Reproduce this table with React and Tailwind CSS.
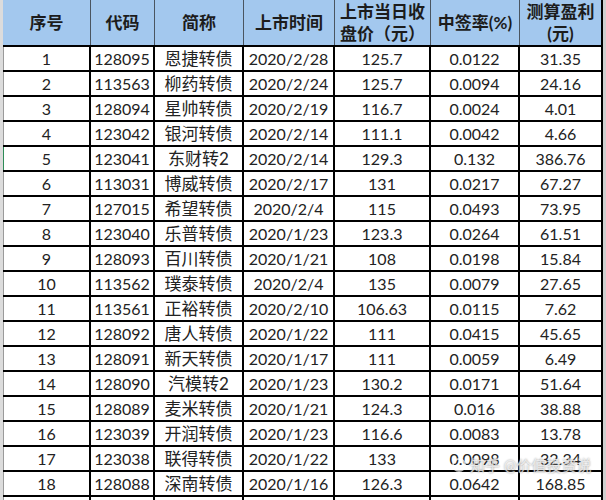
import React from 'react';

const rows = [
  ['1', '128095', '恩捷转债', '2020/2/28', '125.7', '0.0122', '31.35'],
  ['2', '113563', '柳药转债', '2020/2/24', '125.7', '0.0094', '24.16'],
  ['3', '128094', '星帅转债', '2020/2/19', '116.7', '0.0024', '4.01'],
  ['4', '123042', '银河转债', '2020/2/14', '111.1', '0.0042', '4.66'],
  ['5', '123041', '东财转2', '2020/2/14', '129.3', '0.132', '386.76'],
  ['6', '113031', '博威转债', '2020/2/17', '131', '0.0217', '67.27'],
  ['7', '127015', '希望转债', '2020/2/4', '115', '0.0493', '73.95'],
  ['8', '123040', '乐普转债', '2020/1/23', '123.3', '0.0264', '61.51'],
  ['9', '128093', '百川转债', '2020/1/21', '108', '0.0198', '15.84'],
  ['10', '113562', '璞泰转债', '2020/2/4', '135', '0.0079', '27.65'],
  ['11', '113561', '正裕转债', '2020/2/10', '106.63', '0.0115', '7.62'],
  ['12', '128092', '唐人转债', '2020/1/22', '111', '0.0415', '45.65'],
  ['13', '128091', '新天转债', '2020/1/17', '111', '0.0059', '6.49'],
  ['14', '128090', '汽模转2', '2020/1/23', '130.2', '0.0171', '51.64'],
  ['15', '128089', '麦米转债', '2020/1/21', '124.3', '0.016', '38.88'],
  ['16', '123039', '开润转债', '2020/1/23', '116.6', '0.0083', '13.78'],
  ['17', '123038', '联得转债', '2020/1/22', '133', '0.0098', '32.34'],
  ['18', '128088', '深南转债', '2020/1/16', '126.3', '0.0642', '168.85'],
  ['', '', '', '', '', '', ''],
];

const cols = 'grid-cols-[88px_64px_89px_91px_96px_89px_83px]';

export default function App() {
  return (
    <div
      className="relative w-[606px] h-[500px] overflow-hidden bg-[#e4e4e4] flex"
      style={{ fontFamily: 'Lato, "Noto Sans CJK SC", sans-serif' }}
    >
      <div className="w-[3px] shrink-0 bg-[#dcdcdc]" />
      <div className="w-[600px] shrink-0 flex flex-col">
        {/* header */}
        <div className={`grid ${cols} h-[47px] shrink-0 bg-[#a3c8ee] border-b-2 border-black text-[#1c1c1c] font-bold text-[17px] leading-[22px]`}>
          <div className="flex items-center justify-center border-r border-[#4a5560]">序号</div>
          <div className="flex items-center justify-center border-r border-[#4a5560]">代码</div>
          <div className="flex items-center justify-center border-r border-[#4a5560]">简称</div>
          <div className="flex items-center justify-center border-r border-[#4a5560]">上市时间</div>
          <div className="flex flex-col items-center justify-center border-r border-[#4a5560]">
            <span>上市当日收</span>
            <span>盘价（元）</span>
          </div>
          <div className="flex items-center justify-center border-r border-[#4a5560]">中签率(%)</div>
          <div className="flex flex-col items-center justify-center border-r-2 border-black">
            <span>测算盈利</span>
            <span>(元)</span>
          </div>
        </div>
        {/* body */}
        {rows.map((r, i) => (
          <div
            key={i}
            className={`grid ${cols} h-[25px] shrink-0 bg-white border-b-2 border-black text-[#222] text-[16px]`}
          >
            {r.map((c, j) => (
              <div
                key={j}
                className={`flex items-center justify-center leading-none border-r-2 border-black ${
                  j === 2 ? 'text-[17px]' : ''
                } ${
                  j === 0 ? (i === 4 ? 'border-l border-l-[#2e8b57]' : 'border-l border-l-[#9a9a9a]') : ''
                }`}
              >
                {c}
              </div>
            ))}
          </div>
        ))}
      </div>
      <div className="w-[3px] shrink-0 bg-[#cfcfcf]" />

      {/* watermark */}
      <div
        className="absolute left-[452px] top-[454px] flex items-center gap-1 text-[15px] text-white/70"
        style={{ textShadow: '0 0 2px #888' }}
      >
        <span className="w-[14px] h-[14px] rounded-full border-2 border-white/70" />
        <span>知乎 @价值投资说</span>
      </div>
    </div>
  );
}
